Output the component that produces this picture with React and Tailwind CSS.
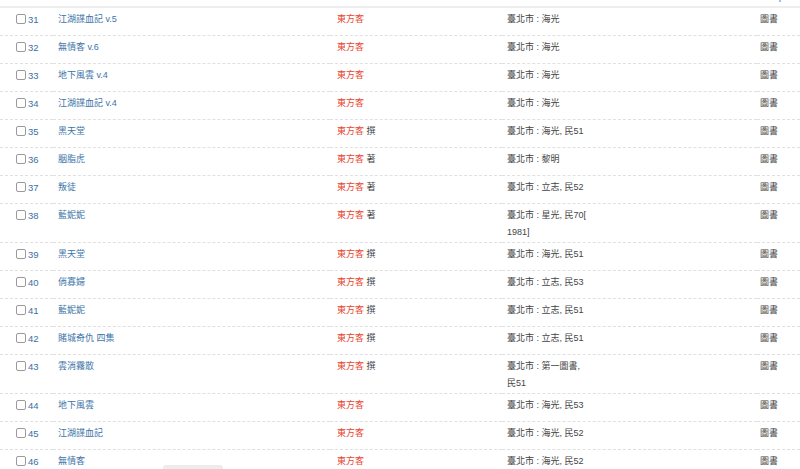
import React from 'react';

const rows = [
  { no: 31, title: '江湖諜血記 v.5', role: '', pub: ['臺北市 : 海光'] },
  { no: 32, title: '無情客 v.6', role: '', pub: ['臺北市 : 海光'] },
  { no: 33, title: '地下風雲 v.4', role: '', pub: ['臺北市 : 海光'] },
  { no: 34, title: '江湖諜血記 v.4', role: '', pub: ['臺北市 : 海光'] },
  { no: 35, title: '黑天堂', role: '撰', pub: ['臺北市 : 海光, 民51'] },
  { no: 36, title: '胭脂虎', role: '著', pub: ['臺北市 : 黎明'] },
  { no: 37, title: '叛徒', role: '著', pub: ['臺北市 : 立志, 民52'] },
  { no: 38, title: '藍妮妮', role: '著', pub: ['臺北市 : 星光, 民70[', '1981]'] },
  { no: 39, title: '黑天堂', role: '撰', pub: ['臺北市 : 海光, 民51'] },
  { no: 40, title: '俏寡婦', role: '撰', pub: ['臺北市 : 立志, 民53'] },
  { no: 41, title: '藍妮妮', role: '撰', pub: ['臺北市 : 立志, 民51'] },
  { no: 42, title: '賭城奇仇 四集', role: '撰', pub: ['臺北市 : 立志, 民51'] },
  { no: 43, title: '雲消霧散', role: '撰', pub: ['臺北市 : 第一圖書,', '民51'] },
  { no: 44, title: '地下風雲', role: '', pub: ['臺北市 : 海光, 民53'] },
  { no: 45, title: '江湖諜血記', role: '', pub: ['臺北市 : 海光, 民52'] },
  { no: 46, title: '無情客', role: '', pub: ['臺北市 : 海光, 民52'] },
];

const cell = 'min-h-[28px] pt-[3px] pb-[1px] border-b border-dashed border-[#e0e0e0]';

export default function App() {
  return (
    <div className="bg-white text-[9px] leading-[17px] text-[#444] font-['Liberation_Sans','Noto_Sans_CJK_TC',sans-serif]">
      {/* top spacer */}
      <div className="h-[6px] relative">
        <span className="absolute left-[779px] top-0 w-[2px] h-[2px] bg-[#9cc3e6]" />
      </div>

      {/* result list */}
      <div className="grid grid-cols-[53px_277px_172px_255px_1fr] border-t-2 border-[#eeeeee]">
        {rows.map((r) => (
          <React.Fragment key={r.no}>
            <div className={`${cell} pl-[16px] flex items-start`}>
              <span className="mt-[3px] mr-[2px] w-[10px] h-[10px] border border-[#9a9a9a] rounded-[2px] bg-white shrink-0" />
              <span className="text-[#3b6fa3] text-[9.5px]">{r.no}</span>
            </div>
            <div className={`${cell} pl-[5px] text-[#3b73a8]`}>{r.title}</div>
            <div className={`${cell} pl-[7px]`}>
              <span className="text-[#e8432d]">東方客</span>
              {r.role && <span> {r.role}</span>}
            </div>
            <div className={`${cell} pl-[5px]`}>
              {r.pub.map((line, i) => (
                <div key={i}>{line}</div>
              ))}
            </div>
            <div className={`${cell} pl-[3px]`}>圖書</div>
          </React.Fragment>
        ))}
      </div>

      {/* floating bar at bottom edge */}
      <div className="fixed left-[163px] top-[465px] w-[60px] h-[10px] rounded-[3px] bg-[#ececec]" />
    </div>
  );
}
